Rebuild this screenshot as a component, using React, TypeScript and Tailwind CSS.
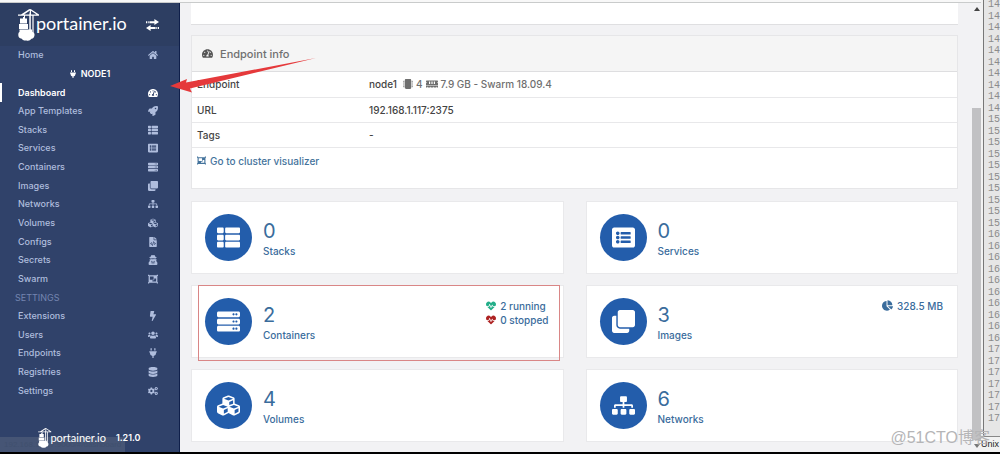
import React from "react";
import type { IconType } from "react-icons";
import {
  FaBolt,
  FaChartPie,
  FaClone,
  FaCogs,
  FaCubes,
  FaDatabase,
  FaFileCode,
  FaHeartbeat,
  FaHome,
  FaListAlt,
  FaMemory,
  FaMicrochip,
  FaObjectGroup,
  FaPlug,
  FaRocket,
  FaServer,
  FaSitemap,
  FaTachometerAlt,
  FaThList,
  FaUsers,
  FaUserSecret,
} from "react-icons/fa";

type NavItem = { label: string; icon: IconType; active?: boolean };

const endpointItems: NavItem[] = [
  { label: "Dashboard", icon: FaTachometerAlt, active: true },
  { label: "App Templates", icon: FaRocket },
  { label: "Stacks", icon: FaThList },
  { label: "Services", icon: FaListAlt },
  { label: "Containers", icon: FaServer },
  { label: "Images", icon: FaClone },
  { label: "Networks", icon: FaSitemap },
  { label: "Volumes", icon: FaCubes },
  { label: "Configs", icon: FaFileCode },
  { label: "Secrets", icon: FaUserSecret },
  { label: "Swarm", icon: FaObjectGroup },
];

const settingsItems: NavItem[] = [
  { label: "Extensions", icon: FaBolt },
  { label: "Users", icon: FaUsers },
  { label: "Endpoints", icon: FaPlug },
  { label: "Registries", icon: FaDatabase },
  { label: "Settings", icon: FaCogs },
];

const lineNumbers = [
  ...Array(10).fill("14"),
  ...Array(10).fill("15"),
  ...Array(10).fill("16"),
  ...Array(7).fill("17"),
];

// Crane lifting containers over a whale
const CraneMark = ({ className }: { className: string }) => (
  <svg viewBox="0 0 22 32" className={className} fill="currentColor" aria-hidden="true">
    <path d="M12 0l1 .2 8 5.3v1.2h-5.4V25h-1.200V6.700h-1.600V25h-1.500V6.700H7V10H6V6.700H0V5.500h3L11 .3zM12 1.600L6 5.500h5.300zM13 1.700v3.800h5.600z" />
    <path d="M2 9.500h3v-1.500h1.500v1.500H9v5H2zM1 15h9v5H1z" />
    <path d="M1.500 20.500h12.500v2.300c1.800.4 2.800 1.800 2.500 3.400-.1 2-1.400 3.300-3 3.500-1.300 1.700-3 2.300-5 1.700-2 .5-4-.2-4.700-1.700C1.300 29.300.2 28 .3 26c0-1.700.4-2.700 1.200-3z" />
  </svg>
);

const TransferIcon = () => (
  <svg viewBox="0 0 13 12" className="h-3 w-[13px]" fill="currentColor" aria-hidden="true">
    <path d="M0 2.200h1v2H0zM1.700 2.200h1v2h-1zM3.400 2.200h5V.1L13 3.100 8.400 6.100V4.200h-5zM13 7.900h-1v2h1zM11.300 7.900h-1v2h1zM9.600 7.900h-5V5.900L0 8.900l4.600 3V9.900h5z" />
  </svg>
);

const NavLink = ({ label, icon: Icon, active }: NavItem) => (
  <a
    href="#"
    className={`flex items-center justify-between pr-5 text-[9px] leading-3 ${
      active
        ? "border-l-2 border-white pl-4 font-semibold text-white"
        : "pl-[18px] font-medium text-[#afbddd]"
    }`}
  >
    {label}
    <span className="flex w-3 justify-center">
      <Icon className="size-[10px]" />
    </span>
  </a>
);

const Sidebar = () => (
  <aside className="relative flex w-[180px] shrink-0 flex-col border-r border-[#0f1f4a] bg-[#30426a]">
    <div className="flex h-[43px] items-center justify-between bg-[#2d3e62] pr-5 pl-[18px] text-white">
      <div className="flex items-center">
        <CraneMark className="h-8 w-[22px]" />
        <span className="-ml-1 pb-1 font-[Lato] text-lg leading-6">portainer.io</span>
      </div>
      <button type="button" aria-label="Toggle sidebar">
        <TransferIcon />
      </button>
    </div>

    <nav className="grid flex-1 auto-rows-fr">
      <NavLink label="Home" icon={FaHome} />
      <div className="flex items-center justify-center gap-1 text-[9px] leading-3 font-semibold text-white">
        <FaPlug className="size-2" />
        NODE1
      </div>
      {endpointItems.map((item) => (
        <NavLink key={item.label} {...item} />
      ))}
      <div className="flex items-center pl-[15px] text-[9px] leading-3 text-[#7485b0]">SETTINGS</div>
      {settingsItems.map((item) => (
        <NavLink key={item.label} {...item} />
      ))}
    </nav>

    {/* Browser status bubble */}
    <div className="absolute bottom-0 left-0 h-[15px] bg-[#5b6780]/50 pr-1 pl-1 font-['Liberation_Sans'] text-[8px] leading-[15px] text-[#40506e]">
      192.168.1.117:9000/#/dashboard
    </div>

    <div className="relative flex h-[52px] items-end justify-center pb-1 text-white">
      <CraneMark className="h-5 w-[14px]" />
      <span className="-ml-[2px] pb-[2px] font-[Lato] text-[11px] leading-4">portainer.io</span>
      <span className="ml-[10px] pb-1 text-[9px] leading-3 font-semibold">1.21.0</span>
    </div>
  </aside>
);

const InfoRow = ({ label, children }: { label: string; children: React.ReactNode }) => (
  <tr className="h-[25px] border-b border-[#e8e8ea]">
    <th scope="row" className="w-[177px] pl-[5px] text-left font-medium">
      {label}
    </th>
    <td className="font-medium">{children}</td>
  </tr>
);

const EndpointInfo = () => (
  <section className="border border-[#e6e6e8] bg-white text-[10px] leading-3 text-[#444]">
    <h2 className="flex h-9 items-center gap-[7px] border-b border-[#dedee0] bg-[#f5f5f5] pl-[10px] text-[11px] leading-4 font-medium text-[#707070]">
      <FaTachometerAlt className="size-[11px] text-[#555]" />
      Endpoint info
    </h2>
    <table className="w-full table-fixed border-collapse">
      <tbody>
        <InfoRow label="Endpoint">
          <span className="flex items-center">
            node1
            <span className="ml-[6px] flex items-center gap-[3px] text-[#6f6f6f]">
              <FaMicrochip className="size-[10px]" />4
              <FaMemory className="size-3" />
              7.9 GB - Swarm 18.09.4
            </span>
          </span>
        </InfoRow>
        <InfoRow label="URL">192.168.1.117:2375</InfoRow>
        <InfoRow label="Tags">-</InfoRow>
      </tbody>
    </table>
    <div className="h-10 px-[5px] pt-[7px]">
      <a href="#" className="inline-flex items-center gap-1 font-medium text-[#44739c]">
        <FaObjectGroup className="size-[9px]" />
        Go to cluster visualizer
      </a>
    </div>
  </section>
);

type CardProps = {
  count: number;
  label: string;
  icon: IconType;
  children?: React.ReactNode;
};

const Card = ({ count, label, icon: Icon, children }: CardProps) => (
  <a
    href="#"
    className="flex h-[73px] items-center border border-[#e9e9eb] bg-white pt-px pr-[14px] pl-[13px] text-[#3a6c9c]"
  >
    <span className="flex size-[47px] items-center justify-center rounded-full bg-[#235dab] text-white">
      <Icon className="size-[23px]" />
    </span>
    <span className="ml-[11px] flex flex-col gap-[2px]">
      <span className="text-xl leading-6">{count}</span>
      <span className="text-[10px] leading-3 font-medium">{label}</span>
    </span>
    <span className="ml-auto flex flex-col gap-[2px] self-start pt-[13px] text-[10px] leading-3 font-medium">
      {children}
    </span>
  </a>
);

const Dashboard = () => (
  <main className="min-w-0 flex-1 bg-[#f2f2f4] pr-[14px] pl-[11px]">
    <div className="h-[22px] border-b border-[#dfdfe1] bg-white" />
    <div className="mt-[10px]">
      <EndpointInfo />
    </div>
    <div className="mt-3 grid grid-cols-2 gap-x-[22px] gap-y-[11px]">
      <Card count={0} label="Stacks" icon={FaThList} />
      <Card count={0} label="Services" icon={FaListAlt} />
      <div className="relative">
        <Card count={2} label="Containers" icon={FaServer}>
          <span className="flex items-center gap-1">
            <FaHeartbeat className="size-[10px] text-[#23ae89]" />2 running
          </span>
          <span className="flex items-center gap-1">
            <FaHeartbeat className="size-[10px] text-[#ae2323]" />0 stopped
          </span>
        </Card>
        <div className="pointer-events-none absolute top-0 right-1 -bottom-[3px] left-[7px] border border-[#d98686]" />
      </div>
      <Card count={3} label="Images" icon={FaClone}>
        <span className="flex items-center gap-1">
          <FaChartPie className="size-[11px]" />
          328.5 MB
        </span>
      </Card>
      <Card count={4} label="Volumes" icon={FaCubes} />
      <Card count={6} label="Networks" icon={FaSitemap} />
    </div>
  </main>
);

const Scrollbar = () => (
  <div className="flex w-[9px] shrink-0 flex-col items-center bg-[#f2f2f4]">
    <svg viewBox="0 0 6 4" className="mt-1 h-1 w-[6px]" fill="#444" aria-hidden="true">
      <path d="M0 4l3-4 3 4z" />
    </svg>
    <div className="mt-[97px] w-[9px] flex-1 bg-[#c1c1c3]" />
    <svg viewBox="0 0 6 4" className="my-1 h-1 w-[6px]" fill="#777" aria-hidden="true">
      <path d="M0 0l3 4 3-4z" />
    </svg>
  </div>
);

// Sliver of the text editor window behind the browser
const Editor = () => (
  <div className="flex w-[19px] shrink-0 flex-col bg-[#f2f2f2]">
    <div className="ml-[2px] flex-1 border-l border-[#777] bg-[#e6e6e6] pl-1 font-['Liberation_Mono'] text-[10px] text-[#8b8b8b]">
      <div className="grid h-[426px] auto-rows-fr">
        {lineNumbers.map((n, i) => (
          <span key={i} className="leading-[10px]">
            {n}
          </span>
        ))}
      </div>
    </div>
    <div className="h-4 border-t border-[#888] font-['Liberation_Sans'] text-[9px] leading-[15px] text-[#222]">
      Unix
    </div>
  </div>
);

export default function App() {
  return (
    <div className="relative flex min-h-screen overflow-hidden border-b-2 border-black bg-[#f2f2f4] font-[Inter,sans-serif]">
      <div className="flex min-w-0 flex-1 flex-col">
        <div className="h-[3px] border-b border-[#c9cbcb] bg-[#f8f8f8]" />
        <div className="flex flex-1">
          <Sidebar />
          <Dashboard />
          <Scrollbar />
        </div>
      </div>
      <Editor />

      {/* Arrow pointing at the Dashboard entry */}
      <svg
        viewBox="0 0 146 36"
        className="pointer-events-none absolute top-[57px] left-[170px] h-9 w-[146px]"
        fill="#e5393b"
        aria-hidden="true"
      >
        <path d="M0 29L17 22l-1 3.500L146 1 20 31.500l2 4z" />
      </svg>

      <div className="pointer-events-none absolute right-[10px] bottom-[6px] font-['Liberation_Sans','Noto_Sans_CJK_SC',sans-serif] text-base leading-4 text-[#b5b5b7]">
        @51CTO博客
      </div>
    </div>
  );
}
